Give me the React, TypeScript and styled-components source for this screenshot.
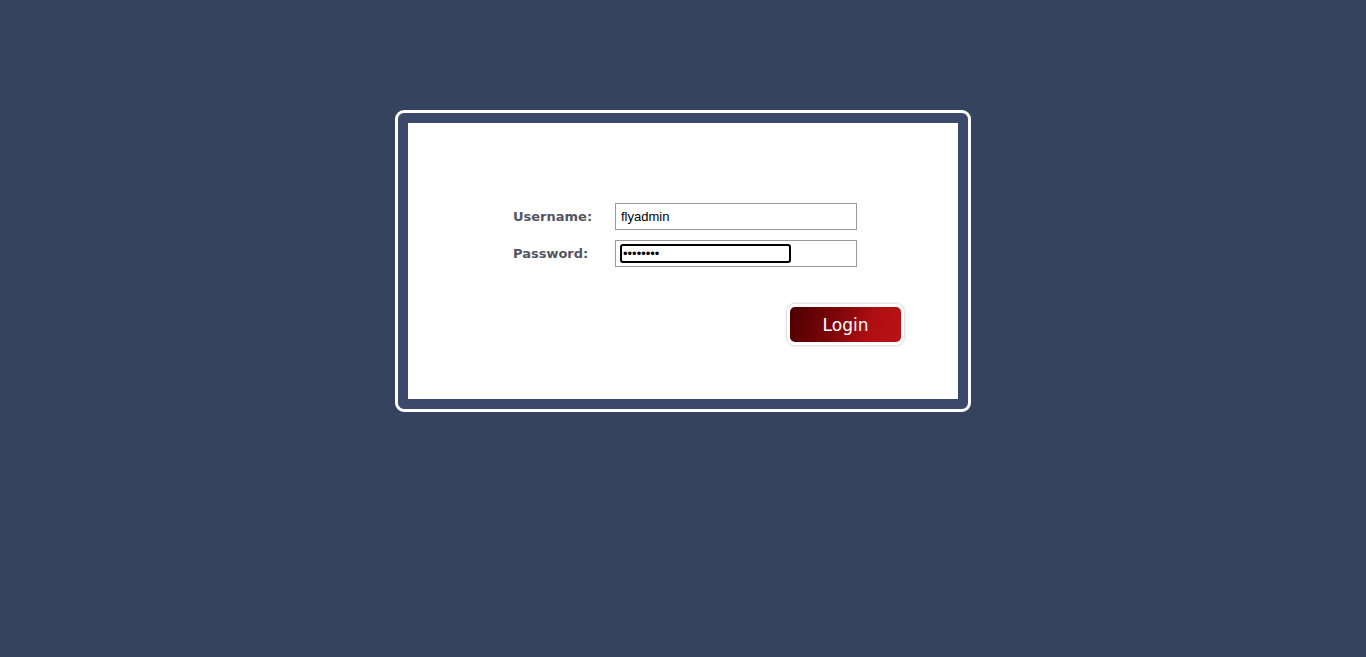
import React from "react";
import styled, { createGlobalStyle } from "styled-components";

const GlobalStyle = createGlobalStyle`
  html, body {
    margin: 0;
    padding: 0;
    background: #35435f;
    height: 100%;
  }
  #root {
    min-height: 100%;
  }
`;

const Page = styled.div`
  padding-top: 110px;
  display: flex;
  justify-content: center;
`;

const Frame = styled.div`
  width: 550px;
  padding: 10px;
  border: 3px solid #ffffff;
  border-radius: 9px;
  background: #3c496b;
`;

const Panel = styled.form`
  height: 276px;
  box-sizing: border-box;
  background: #ffffff;
  padding: 80px 0 0 105px;
`;

const Fields = styled.div`
  display: grid;
  grid-template-columns: 102px 242px;
  row-gap: 10px;
  align-items: center;
`;

const Label = styled.label`
  font-family: "DejaVu Sans", Verdana, sans-serif;
  font-weight: bold;
  font-size: 13px;
  color: #55555f;
`;

const FieldBox = styled.div`
  box-sizing: border-box;
  height: 27px;
  border: 1px solid #9a9a9a;
  padding: 0 4px;
  display: flex;
  align-items: center;
`;

const TextInput = styled.input<{ $focused?: boolean }>`
  font-family: "Liberation Sans", Arial, sans-serif;
  font-size: 13px;
  color: #000;
  background: #fff;
  outline: none;
  box-sizing: border-box;
  padding: 0 1px;
  height: 19px;
  ${(p) =>
    p.$focused
      ? `
    width: 171px;
    border: 2px solid #000;
    border-radius: 3px;
  `
      : `
    width: 100%;
    border: none;
  `}
`;

const ButtonRow = styled.div`
  display: flex;
  padding: 37px 0 0 274px;
`;

const LoginButton = styled.button`
  width: 117px;
  height: 41px;
  box-sizing: border-box;
  border: 3px solid #ffffff;
  border-radius: 8px;
  box-shadow: 0 0 3px rgba(0, 0, 0, 0.3);
  background: linear-gradient(110deg, #4a0003 0%, #7a0508 38%, #b00f12 72%, #bb1216 100%);
  color: #ffffff;
  font-family: "DejaVu Sans", Verdana, sans-serif;
  font-size: 17px;
  padding: 0;
  cursor: pointer;
`;

export default function App() {
  return (
    <>
      <GlobalStyle />
      <Page>
        <Frame>
          <Panel onSubmit={(e) => e.preventDefault()}>
            <Fields>
              <Label htmlFor="user">Username:</Label>
              <FieldBox>
                <TextInput id="user" type="text" defaultValue="flyadmin" />
              </FieldBox>
              <Label htmlFor="pass">Password:</Label>
              <FieldBox>
                <TextInput id="pass" type="password" defaultValue="password" $focused />
              </FieldBox>
            </Fields>
            <ButtonRow>
              <LoginButton type="submit">Login</LoginButton>
            </ButtonRow>
          </Panel>
        </Frame>
      </Page>
    </>
  );
}
